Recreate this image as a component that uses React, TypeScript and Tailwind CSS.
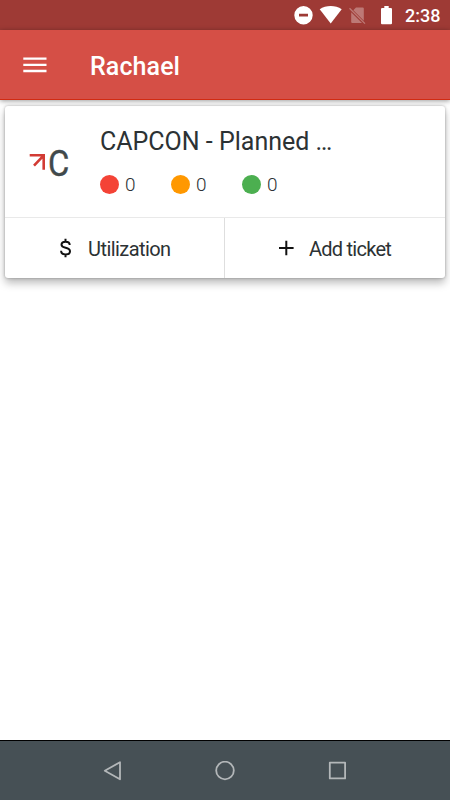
import type { ReactNode } from 'react';

const counters = [
    { id: 'red', color: 'bg-[#f44336]', value: 0 },
    { id: 'orange', color: 'bg-[#ff9800]', value: 0 },
    { id: 'green', color: 'bg-[#4caf50]', value: 0 },
];

function StatusBar() {
    return (
        <div className="flex h-[30px] shrink-0 items-center bg-[#9e3a35] pl-[294px] text-white">
            <svg className="h-[30px] w-[102px] shrink-0" viewBox="294 0 102 30" fill="currentColor">
                {/* Do not disturb */}
                <path fillRule="evenodd" d="M303.5 6a9.2 9.2 0 1 0 0 18.4 9.2 9.2 0 0 0 0-18.4zM299 13.8h9v2.8h-9z" />
                {/* Wifi */}
                <path d="M319.7 9.3c6.2-4.4 15.8-4.4 22 0L330.7 23.4z" />
                {/* No SIM */}
                <g opacity="0.32">
                    <path d="M353.3 10.2 356 7.5h6.8q1 0 1 1v12.2zM351.2 12.3 362 23h-9.8q-1 0-1-1z" />
                    <path d="M349.5 8.2 365 23.6" stroke="currentColor" strokeWidth="1.3" />
                </g>
                {/* Battery */}
                <path d="M384.3 6h4.4v2h2.2q1.1 0 1.1 1v14.3q0 1-1 1h-9q-1 0-1-1V9q0-1 1.1-1h2.2z" />
            </svg>
            <span className="mt-[2px] ml-[9px] text-[18px] leading-[28px] font-medium">2:38</span>
        </div>
    );
}

function AppHeader() {
    return (
        <header className="z-10 flex h-[70px] shrink-0 items-center border-b border-[#d12b12] bg-[#d54f46] pl-[23px] text-white shadow-[0_1px_5px_rgba(0,0,0,0.4)]">
            <button type="button" aria-label="Menu" className="mt-[1px] h-4 w-6">
                <svg className="h-4 w-6" viewBox="0 0 24 16" stroke="currentColor" strokeWidth="2.3">
                    <path d="M.3 1.6H23.5M.3 7.8H23.5M.3 14H23.5" />
                </svg>
            </button>
            <h1 className="mt-[5px] ml-[43px] text-[25px] leading-8 font-medium tracking-[0.1px]">Rachael</h1>
        </header>
    );
}

function Logo() {
    return (
        <svg className="mt-[30px] ml-[24px] h-[54px] w-[46px] shrink-0" viewBox="29 136 46 54">
            <path d="M29.7 155.3H43.7V169.8M43 156.2L34 165.7" fill="none" stroke="#d23b34" strokeWidth="2.6" />
            <text transform="translate(48 175.8) scale(0.87 1)" fontSize="37.5" fontWeight="400" fill="#41494b" stroke="#41494b" strokeWidth="0.4">C</text>
        </svg>
    );
}

function CardAction({ icon, label, className }: { icon: ReactNode; label: string; className: string }) {
    return (
        <button type="button" className={`flex items-center ${className}`}>
            {icon}
            <span className="mt-[2px] text-[20px] leading-7">{label}</span>
        </button>
    );
}

export default function App() {
    return (
        <div className="flex h-[800px] w-[450px] flex-col overflow-hidden bg-white font-[Roboto,sans-serif] text-[#2c3234]">
            <StatusBar />
            <AppHeader />

            <main className="flex-1 px-[5px] pt-[6px]">
                <section className="h-[172px] rounded-[3px] bg-white shadow-[0_5px_9px_rgba(0,0,0,0.27),0_0_3px_rgba(0,0,0,0.3)]">
                    <div className="flex h-[112px] border-b border-[#e9e9e9]">
                        <Logo />
                        <div className="ml-[25px] pt-[21px]">
                            <h2 className="text-[25px] leading-[30px] whitespace-nowrap">CAPCON - Planned …</h2>
                            <div className="mt-[15px] flex">
                                {counters.map(c => (
                                    <div key={c.id} className="flex h-6 w-[71px] items-center">
                                        <span className={`h-[19px] w-[19px] rounded-full ${c.color}`} />
                                        <span className="mt-[1px] ml-[6px] text-[19px] leading-6 font-light">{c.value}</span>
                                    </div>
                                ))}
                            </div>
                        </div>
                    </div>

                    <div className="flex h-[60px]">
                        <CardAction
                            label="Utilization"
                            className="w-[220px] border-r border-[#dedede] pl-[55px] tracking-[-0.56px]"
                            icon={
                                <svg className="mr-[17px] h-5 w-[11px]" viewBox="0 0 11 20" fill="none" stroke="#111" strokeWidth="2">
                                    <path d="M5.5 .8V4M5.5 16.2V19.3M9.7 7C9.7 4.8 8 3.7 5.6 3.7 3.1 3.7 1.5 4.9 1.5 6.7 1.5 10.9 10 8.7 10 13.2 10 15.2 8.2 16.4 5.7 16.4 3 16.4 1.1 15.1 1.1 12.7" />
                                </svg>
                            }
                        />
                        <CardAction
                            label="Add ticket"
                            className="w-[220px] pl-[53px] tracking-[-0.75px]"
                            icon={
                                <svg className="mr-[15px] h-4 w-4" viewBox="0 0 16 16" stroke="#111" strokeWidth="2">
                                    <path d="M8.3 .7V15.3M1 8H15.6" />
                                </svg>
                            }
                        />
                    </div>
                </section>
            </main>

            {/* Android navigation */}
            <nav className="flex h-[60px] shrink-0 items-center justify-center gap-[92px] border-t border-black bg-[#465055] text-[#b3b7b9]">
                <svg className="h-5 w-5" viewBox="0 0 20 20" fill="none" stroke="currentColor" strokeWidth="1.8" strokeLinejoin="round">
                    <path d="M17 1.2V18.3L1.8 9.7Z" />
                </svg>
                <svg className="h-5 w-5" viewBox="0 0 20 20" fill="none" stroke="currentColor" strokeWidth="1.8">
                    <circle cx="10" cy="9.5" r="8.8" />
                </svg>
                <svg className="h-5 w-5" viewBox="0 0 20 20" fill="none" stroke="currentColor" strokeWidth="1.8" strokeLinejoin="round">
                    <rect x="2.8" y="1.6" width="15.3" height="15.8" />
                </svg>
            </nav>
        </div>
    );
}
